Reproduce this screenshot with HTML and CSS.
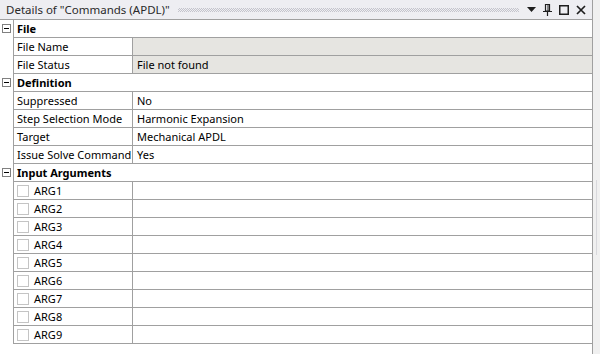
FILE: index.html
```html
<!DOCTYPE html>
<html lang="en">
<head>
    <meta charset="UTF-8">
    <title>Details of "Commands (APDL)"</title>
    <link rel="stylesheet" href="styles.css">
</head>
<body>
    <div class="window">
        <div class="panel">
            <div class="titlebar">
                <span class="title">Details of "Commands (APDL)"</span>
                <span class="grip"></span>
                <span class="tools">
                    <svg width="9" height="6" viewBox="0 0 9 6"><path d="M0 0h9L4.5 5z" fill="#1e1e1e"/></svg>
                    <svg width="9" height="12" viewBox="0 0 9 12"><path d="M2.5 0.5h4v6.5h-4z M0 7.5h9 M4.5 8v4" stroke="#1e1e1e" stroke-width="1.2" fill="none"/><path d="M5 1v6" stroke="#1e1e1e" stroke-width="1"/></svg>
                    <svg width="10" height="10" viewBox="0 0 10 10"><rect x="0.75" y="0.75" width="8.5" height="8.5" stroke="#1e1e1e" stroke-width="1.5" fill="none"/></svg>
                    <svg width="10" height="10" viewBox="0 0 10 10"><path d="M1 1l8 8M9 1l-8 8" stroke="#1e1e1e" stroke-width="1.7"/></svg>
                </span>
            </div>

            <div class="grid">
                <!-- File -->
                <div class="row group"><span class="toggle"></span><div class="cell">File</div></div>
                <div class="row"><span class="gutter"></span><div class="cell name">File Name</div><div class="cell value readonly"></div></div>
                <div class="row"><span class="gutter"></span><div class="cell name">File Status</div><div class="cell value readonly">File not found</div></div>

                <!-- Definition -->
                <div class="row group"><span class="toggle"></span><div class="cell">Definition</div></div>
                <div class="row"><span class="gutter"></span><div class="cell name">Suppressed</div><div class="cell value">No</div></div>
                <div class="row"><span class="gutter"></span><div class="cell name">Step Selection Mode</div><div class="cell value">Harmonic Expansion</div></div>
                <div class="row"><span class="gutter"></span><div class="cell name">Target</div><div class="cell value">Mechanical APDL</div></div>
                <div class="row"><span class="gutter"></span><div class="cell name">Issue Solve Command</div><div class="cell value">Yes</div></div>

                <!-- Input Arguments -->
                <div class="row group"><span class="toggle"></span><div class="cell">Input Arguments</div></div>
                <div class="row"><span class="gutter"></span><div class="cell name"><span class="check"></span>ARG1</div><div class="cell value"></div></div>
                <div class="row"><span class="gutter"></span><div class="cell name"><span class="check"></span>ARG2</div><div class="cell value"></div></div>
                <div class="row"><span class="gutter"></span><div class="cell name"><span class="check"></span>ARG3</div><div class="cell value"></div></div>
                <div class="row"><span class="gutter"></span><div class="cell name"><span class="check"></span>ARG4</div><div class="cell value"></div></div>
                <div class="row"><span class="gutter"></span><div class="cell name"><span class="check"></span>ARG5</div><div class="cell value"></div></div>
                <div class="row"><span class="gutter"></span><div class="cell name"><span class="check"></span>ARG6</div><div class="cell value"></div></div>
                <div class="row"><span class="gutter"></span><div class="cell name"><span class="check"></span>ARG7</div><div class="cell value"></div></div>
                <div class="row"><span class="gutter"></span><div class="cell name"><span class="check"></span>ARG8</div><div class="cell value"></div></div>
                <div class="row"><span class="gutter"></span><div class="cell name"><span class="check"></span>ARG9</div><div class="cell value"></div></div>
            </div>
        </div>
        <div class="side">
            <div class="side-thumb"></div>
        </div>
    </div>
</body>
</html>
```

FILE: styles.css
```css
body {
    margin: 0;
    font-family: 'Noto Sans', 'Open Sans', sans-serif;
    font-size: 11px;
    color: #000;
    background-color: #fff;
}
.window {
    display: flex;
    width: 600px;
    height: 354px;
}
.panel {
    width: 592px;
    border-right: 1px solid #a0a0a0;
    background-color: #fff;
}
.side {
    flex: 1;
    background-color: #f0f0f0;
    padding-top: 180px;
}
.side-thumb {
    margin-left: 3px;
    height: 75px;
    border-left: 1px solid #d8d8dc;
}
.titlebar {
    height: 19px;
    display: flex;
    align-items: center;
    background-color: #eeeef2;
    border-bottom: 1px solid #a0a0a0;
    padding-left: 6px;
}
.title {
    color: #2a2a2a;
    font-size: 11.5px;
    white-space: nowrap;
}
.grip {
    flex: 1;
    height: 4px;
    margin: 1px 8px 0 8px;
    background-image: repeating-conic-gradient(#c4c4cc 0 25%, transparent 0 50%);
    background-size: 2px 2px;
}
.tools {
    display: flex;
    align-items: center;
    gap: 7px;
    padding-right: 6px;
}
.row {
    display: flex;
    height: 18px;
}
.gutter,
.toggle {
    width: 13px;
    flex: none;
    position: relative;
}
.toggle::before {
    content: '';
    position: absolute;
    left: 2px;
    top: 4px;
    width: 7px;
    height: 7px;
    border: 1px solid #808080;
    background: #fff;
}
.toggle::after {
    content: '';
    position: absolute;
    left: 4px;
    top: 8px;
    width: 5px;
    height: 1px;
    background: #000;
}
.cell {
    display: flex;
    align-items: center;
    border-bottom: 1px solid #a0a0a0;
    white-space: nowrap;
    overflow: hidden;
}
.group .cell {
    flex: 1;
    border-left: 1px solid #a0a0a0;
    padding-left: 3px;
    font-weight: bold;
}
.name {
    width: 115px;
    flex: none;
    border-left: 1px solid #a0a0a0;
    border-right: 1px solid #a0a0a0;
    padding-left: 3px;
}
.value {
    flex: 1;
    padding-left: 4px;
}
.readonly {
    background-color: #e6e5e1;
}
.check {
    width: 10px;
    height: 10px;
    border: 1px solid #c4c4c4;
    margin-right: 5px;
    flex: none;
}
```
